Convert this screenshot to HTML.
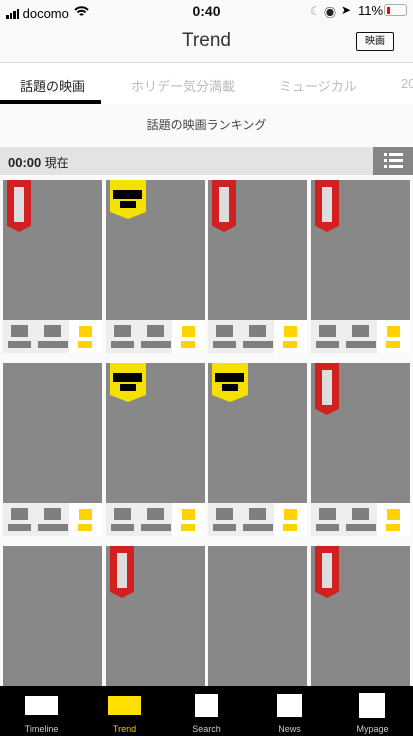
<!DOCTYPE html>
<html><head><meta charset="utf-8"><style>
*{margin:0;padding:0;box-sizing:border-box}
body{width:413px;height:736px;overflow:hidden;background:#fafafa;font-family:"Liberation Sans","Noto Sans CJK JP",sans-serif;position:relative}
.a{position:absolute}
.card{position:absolute;width:99px}
.img{position:absolute;left:0;top:0;width:99px;height:140px;background:#888}
.info{position:absolute;left:0;top:140px;width:99px;height:33px;background:#eee}
.info .w{position:absolute;left:66px;top:0;width:33px;height:33px;background:#fff}
.g{position:absolute;background:#7f7f7f}
.y{position:absolute;background:#ffd200}
.red{position:absolute;left:4px;top:0;width:24px;height:52px;background:#d02020;clip-path:polygon(0 0,100% 0,100% 88%,50% 100%,0 88%)}
.red i{position:absolute;left:7px;top:7px;width:10px;height:35px;background:#ddd}
.yel{position:absolute;left:4px;top:0;width:36px;height:39px;background:#f5e100;clip-path:polygon(0 0,100% 0,100% 82%,50% 100%,0 82%)}
.yel i{position:absolute;background:#000}
</style></head><body>
<!-- status bar -->
<div class="a" style="left:6px;top:6px;font-size:13px;color:#000;">
<span style="display:inline-block;vertical-align:middle">
<span style="display:inline-block;width:2.5px;height:4px;background:#000;margin-right:1px"></span><span style="display:inline-block;width:2.5px;height:6px;background:#000;margin-right:1px"></span><span style="display:inline-block;width:2.5px;height:8px;background:#000;margin-right:1px"></span><span style="display:inline-block;width:2.5px;height:10px;background:#000"></span></span> docomo</div>
<svg class="a" style="left:74px;top:6px" width="15" height="11" viewBox="0 0 15 11"><path d="M1 4a9 9 0 0 1 13 0M3.5 6.5a5.5 5.5 0 0 1 8 0M6 9a2 2 0 0 1 3 0" stroke="#000" stroke-width="2" fill="none"/></svg>
<div class="a" style="left:0;width:413px;top:3px;text-align:center;font-size:14px;font-weight:bold;color:#111">0:40</div>
<div class="a" style="left:310px;top:4px;font-size:12px;color:#999">☾</div>
<div class="a" style="left:324px;top:4px;font-size:12px;color:#222">◉</div>
<div class="a" style="left:341px;top:3px;font-size:12px;color:#000">➤</div>
<div class="a" style="left:358px;top:3px;font-size:13px;color:#000">11%</div>
<div class="a" style="left:384px;top:4px;width:23px;height:12px;border:1px solid #aaa;border-radius:3px"><div style="margin:1.5px;width:3px;height:7px;background:#f00"></div></div>
<!-- nav -->
<div class="a" style="left:0;top:30px;width:413px;text-align:center;font-size:19px;color:#333">Trend</div>
<div class="a" style="left:356px;top:32px;width:38px;height:19px;border:1px solid #111;border-radius:2px;font-size:10px;text-align:center;line-height:17px;color:#111">映画</div>
<div class="a" style="left:0;top:62px;width:413px;height:1px;background:#ddd"></div>
<!-- tabs -->
<div class="a" style="left:0;top:63px;width:413px;height:41px;background:#fff"></div>
<div class="a" style="left:20px;top:76px;font-size:13px;color:#222">話題の映画</div>
<div class="a" style="left:131px;top:76px;font-size:13px;color:#bbb">ホリデー気分満載</div>
<div class="a" style="left:279px;top:76px;font-size:13px;color:#bbb">ミュージカル</div>
<div class="a" style="left:401px;top:76px;font-size:13px;color:#bbb">20</div>
<div class="a" style="left:0;top:100px;width:101px;height:4px;background:#000"></div>
<div class="a" style="left:0;top:116px;width:413px;text-align:center;font-size:12px;color:#444">話題の映画ランキング</div>
<!-- time bar -->
<div class="a" style="left:0;top:147px;width:413px;height:28px;background:#e3e3e3"></div>
<div class="a" style="left:8px;top:154px;font-size:12px;color:#222"><b style="font-size:13px">00:00</b> 現在</div>
<div class="a" style="left:373px;top:147px;width:40px;height:28px;background:#858585">
<div class="a" style="left:11px;top:6px;width:3px;height:3px;background:#fff"></div><div class="a" style="left:16px;top:6px;width:14px;height:3px;background:#fff"></div>
<div class="a" style="left:11px;top:12px;width:3px;height:3px;background:#fff"></div><div class="a" style="left:16px;top:12px;width:14px;height:3px;background:#fff"></div>
<div class="a" style="left:11px;top:18px;width:3px;height:3px;background:#fff"></div><div class="a" style="left:16px;top:18px;width:14px;height:3px;background:#fff"></div>
</div>

<!-- row 1 -->
<div class="card" style="left:3px;top:180px"><div class="img"></div><div class="info"><div class="w"></div><div class="g" style="left:8px;top:5px;width:17px;height:12px"></div><div class="g" style="left:5px;top:21px;width:23px;height:7px"></div><div class="g" style="left:41px;top:5px;width:17px;height:12px"></div><div class="g" style="left:35px;top:21px;width:30px;height:7px"></div><div class="y" style="left:76px;top:6px;width:13px;height:11px"></div><div class="y" style="left:75px;top:21px;width:14px;height:7px"></div></div><div class="red"><i></i></div></div>
<div class="card" style="left:106px;top:180px"><div class="img"></div><div class="info"><div class="w"></div><div class="g" style="left:8px;top:5px;width:17px;height:12px"></div><div class="g" style="left:5px;top:21px;width:23px;height:7px"></div><div class="g" style="left:41px;top:5px;width:17px;height:12px"></div><div class="g" style="left:35px;top:21px;width:30px;height:7px"></div><div class="y" style="left:76px;top:6px;width:13px;height:11px"></div><div class="y" style="left:75px;top:21px;width:14px;height:7px"></div></div><div class="yel"><i style="left:3px;top:10px;width:29px;height:9px"></i><i style="left:10px;top:21px;width:16px;height:7px"></i></div></div>
<div class="card" style="left:208px;top:180px"><div class="img"></div><div class="info"><div class="w"></div><div class="g" style="left:8px;top:5px;width:17px;height:12px"></div><div class="g" style="left:5px;top:21px;width:23px;height:7px"></div><div class="g" style="left:41px;top:5px;width:17px;height:12px"></div><div class="g" style="left:35px;top:21px;width:30px;height:7px"></div><div class="y" style="left:76px;top:6px;width:13px;height:11px"></div><div class="y" style="left:75px;top:21px;width:14px;height:7px"></div></div><div class="red"><i></i></div></div>
<div class="card" style="left:311px;top:180px"><div class="img"></div><div class="info"><div class="w"></div><div class="g" style="left:8px;top:5px;width:17px;height:12px"></div><div class="g" style="left:5px;top:21px;width:23px;height:7px"></div><div class="g" style="left:41px;top:5px;width:17px;height:12px"></div><div class="g" style="left:35px;top:21px;width:30px;height:7px"></div><div class="y" style="left:76px;top:6px;width:13px;height:11px"></div><div class="y" style="left:75px;top:21px;width:14px;height:7px"></div></div><div class="red"><i></i></div></div>
<!-- row 2 -->
<div class="card" style="left:3px;top:363px"><div class="img"></div><div class="info"><div class="w"></div><div class="g" style="left:8px;top:5px;width:17px;height:12px"></div><div class="g" style="left:5px;top:21px;width:23px;height:7px"></div><div class="g" style="left:41px;top:5px;width:17px;height:12px"></div><div class="g" style="left:35px;top:21px;width:30px;height:7px"></div><div class="y" style="left:76px;top:6px;width:13px;height:11px"></div><div class="y" style="left:75px;top:21px;width:14px;height:7px"></div></div></div>
<div class="card" style="left:106px;top:363px"><div class="img"></div><div class="info"><div class="w"></div><div class="g" style="left:8px;top:5px;width:17px;height:12px"></div><div class="g" style="left:5px;top:21px;width:23px;height:7px"></div><div class="g" style="left:41px;top:5px;width:17px;height:12px"></div><div class="g" style="left:35px;top:21px;width:30px;height:7px"></div><div class="y" style="left:76px;top:6px;width:13px;height:11px"></div><div class="y" style="left:75px;top:21px;width:14px;height:7px"></div></div><div class="yel"><i style="left:3px;top:10px;width:29px;height:9px"></i><i style="left:10px;top:21px;width:16px;height:7px"></i></div></div>
<div class="card" style="left:208px;top:363px"><div class="img"></div><div class="info"><div class="w"></div><div class="g" style="left:8px;top:5px;width:17px;height:12px"></div><div class="g" style="left:5px;top:21px;width:23px;height:7px"></div><div class="g" style="left:41px;top:5px;width:17px;height:12px"></div><div class="g" style="left:35px;top:21px;width:30px;height:7px"></div><div class="y" style="left:76px;top:6px;width:13px;height:11px"></div><div class="y" style="left:75px;top:21px;width:14px;height:7px"></div></div><div class="yel"><i style="left:3px;top:10px;width:29px;height:9px"></i><i style="left:10px;top:21px;width:16px;height:7px"></i></div></div>
<div class="card" style="left:311px;top:363px"><div class="img"></div><div class="info"><div class="w"></div><div class="g" style="left:8px;top:5px;width:17px;height:12px"></div><div class="g" style="left:5px;top:21px;width:23px;height:7px"></div><div class="g" style="left:41px;top:5px;width:17px;height:12px"></div><div class="g" style="left:35px;top:21px;width:30px;height:7px"></div><div class="y" style="left:76px;top:6px;width:13px;height:11px"></div><div class="y" style="left:75px;top:21px;width:14px;height:7px"></div></div><div class="red"><i></i></div></div>
<!-- row 3 -->
<div class="card" style="left:3px;top:546px"><div class="img"></div></div>
<div class="card" style="left:106px;top:546px"><div class="img"></div><div class="red"><i></i></div></div>
<div class="card" style="left:208px;top:546px"><div class="img"></div></div>
<div class="card" style="left:311px;top:546px"><div class="img"></div><div class="red"><i></i></div></div>

<!-- tab bar -->
<div class="a" style="left:0;top:686px;width:413px;height:50px;background:#000"></div>
<div class="a" style="left:25px;top:696px;width:33px;height:19px;background:#fff"></div>
<div class="a" style="left:108px;top:696px;width:33px;height:19px;background:#ffe000"></div>
<div class="a" style="left:195px;top:694px;width:23px;height:23px;background:#fff"></div>
<div class="a" style="left:277px;top:694px;width:25px;height:23px;background:#fff"></div>
<div class="a" style="left:359px;top:693px;width:26px;height:25px;background:#fff"></div>
<div class="a" style="left:10px;top:724px;width:63px;text-align:center;font-size:9px;color:#ccc">Timeline</div>
<div class="a" style="left:93px;top:724px;width:63px;text-align:center;font-size:9px;color:#e8cc00">Trend</div>
<div class="a" style="left:175px;top:724px;width:63px;text-align:center;font-size:9px;color:#ccc">Search</div>
<div class="a" style="left:258px;top:724px;width:63px;text-align:center;font-size:9px;color:#ccc">News</div>
<div class="a" style="left:341px;top:724px;width:63px;text-align:center;font-size:9px;color:#ccc">Mypage</div>
</body></html>
